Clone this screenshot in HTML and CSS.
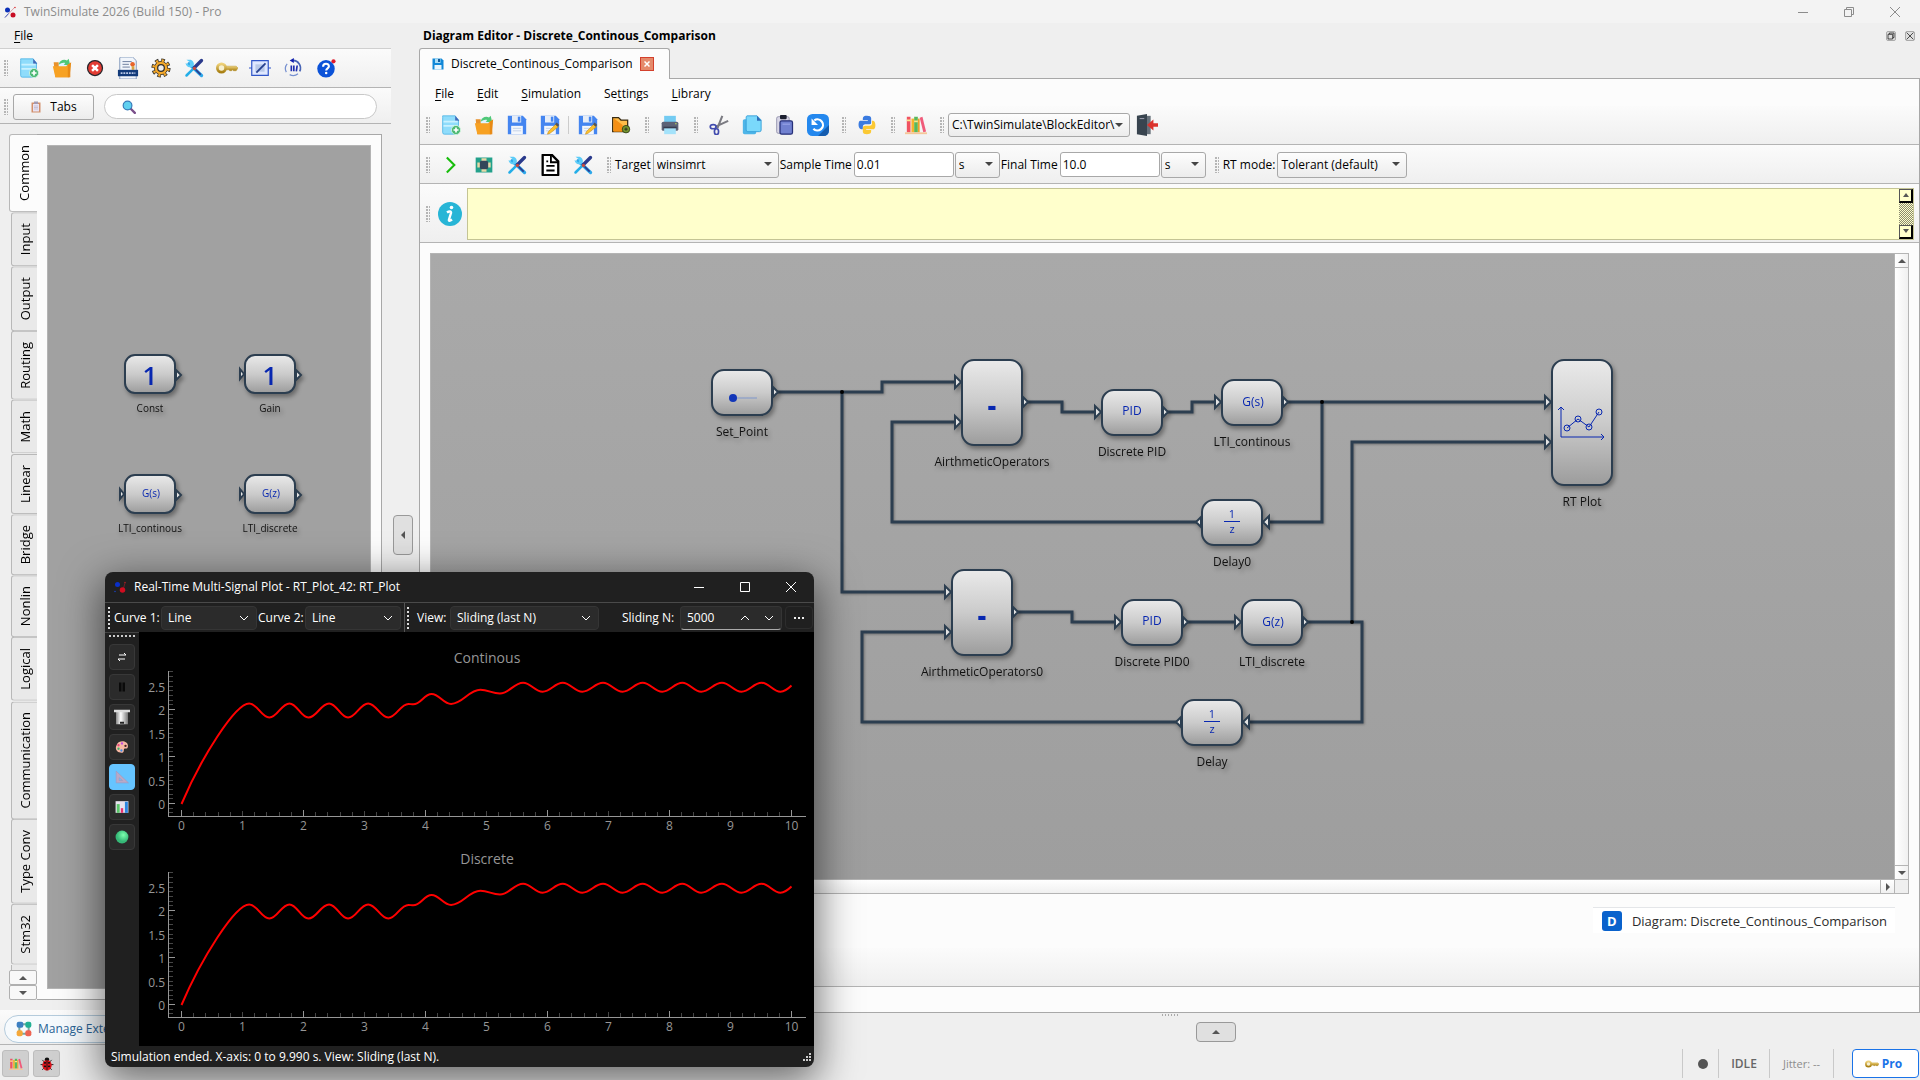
FILE: index.html
```html
<!DOCTYPE html>
<html lang="en">
<head>
<meta charset="utf-8">
<title>TwinSimulate 2026 (Build 150) - Pro</title>
<link rel="stylesheet" href="styles.css">
</head>
<body>
<svg class="defs" aria-hidden="true">
  <defs>
    <linearGradient id="blockFill" x1="0" y1="0" x2="0" y2="1"><stop offset="0" stop-color="#eaeaea"/><stop offset=".5" stop-color="#cbcbcb"/><stop offset="1" stop-color="#9c9c9c"/></linearGradient>
    <linearGradient id="goldFill" x1="0" y1="0" x2="0" y2="1"><stop offset="0" stop-color="#efd27a"/><stop offset="1" stop-color="#a87f12"/></linearGradient>
    <linearGradient id="binFill"><stop offset="0" stop-color="#888"/><stop offset=".4" stop-color="#fff"/><stop offset="1" stop-color="#777"/></linearGradient>
    <radialGradient id="greenFill" cx=".6" cy=".35"><stop offset="0" stop-color="#7dffae"/><stop offset="1" stop-color="#35b877"/></radialGradient>
  </defs>
  <symbol id="logo" viewBox="0 0 24 24"><path d="M2 23 22 2" stroke="#d8a0a8" stroke-width="2"/><path d="M2 23 9 15" stroke="#4466cc" stroke-width="2"/><circle cx="7" cy="8" r="5" fill="#0a2fb8"/><circle cx="18" cy="18" r="5" fill="#c80d24"/><circle cx="22" cy="3" r="1.500" fill="#d33"/></symbol>
  <symbol id="logo-dark" viewBox="0 0 24 24"><path d="M18 18 22 4" stroke="#8c1c28" stroke-width="1.500"/><circle cx="7" cy="7" r="5" fill="#0a2fc8"/><circle cx="17" cy="18" r="5.500" fill="#d00d20"/><circle cx="22" cy="3" r="1.500" fill="#b22"/><circle cx="2" cy="21" r="1.500" fill="#1a44c8"/></symbol>
  <symbol id="new" viewBox="0 0 24 24"><path d="M2 1h15l4 5v15a2 2 0 0 1-2 2H4a2 2 0 0 1-2-2V3z" fill="#8fdcfb" stroke="#4fb6e6"/><path d="M17 1l5 6h-5z" fill="#4169b8"/><path d="M3 8h17M3 13h17" stroke="#c9f1ff" stroke-width="2"/><circle cx="18" cy="18" r="5.500" fill="#4cb874" stroke="#d5f5e0"/><path d="M18 15v6M15 18h6" stroke="#fff" stroke-width="2"/></symbol>
  <symbol id="open" viewBox="0 0 24 24"><path d="M2 5h6l2 3h12v15H4z" fill="#e8912b"/><path d="M8 4h10l3 3v8H8z" fill="#dff3ff"/><path d="M8 8c1-5 6-7 10-5l2-2 2 8-8-1 2-2c-3-1-5 0-8 2z" fill="#4fc878"/><path d="M1 10h16l3-3 2 3-2 13H4z" fill="#f7a122"/><path d="m19 8 4-3-2 18h-2z" fill="#e88a14"/></symbol>
  <symbol id="stop" viewBox="0 0 24 24"><circle cx="12" cy="12" r="9" fill="#e33c33" stroke="#25252b" stroke-width="1.500"/><path d="m8.500 8.500 7 7m0-7-7 7" stroke="#fff" stroke-width="3"/></symbol>
  <symbol id="example" viewBox="0 0 24 24"><path d="M4 0h13l4 4v20H3V1z" fill="#f1f5fb" stroke="#7d94b8"/><path d="M6 5h10M6 8h7M6 11h8" stroke="#667799"/><circle cx="17" cy="8" r="2.500" fill="#e8642b"/><path d="M16 10h3v4h-3z" fill="#d9a441"/><path d="M1 14h22v7H1z" fill="#123a7a"/><path d="M4 17.500h16" stroke="#b9c8e8" stroke-width="2" stroke-dasharray="2 1"/></symbol>
  <symbol id="gear" viewBox="0 0 24 24"><circle cx="12" cy="12" r="9" fill="none" stroke="#32302c" stroke-width="5" stroke-dasharray="4 3.070"/><circle cx="12" cy="12" r="8" fill="#f5a92a" stroke="#32302c"/><circle cx="12" cy="12" r="9" fill="none" stroke="#f5a92a" stroke-width="3" stroke-dasharray="2.500 4.570" stroke-dashoffset="-.7"/><circle cx="12" cy="12" r="4" fill="#eee" stroke="#32302c" stroke-width="1.500"/></symbol>
  <symbol id="tools" viewBox="0 0 24 24"><path d="M6 7 21 21" stroke="#2ca7ea" stroke-width="4" stroke-linecap="round"/><path d="M3 2l4 3v4L2 6c0 3 3 6 7 5s4-7-1-9z" fill="#5cccf8"/><path d="m21 3-9 9" stroke="#2a3a8c" stroke-width="4" stroke-linecap="round"/><path d="M11 13 3 21" stroke="#23aee8" stroke-width="3" stroke-linecap="round"/><circle cx="12.500" cy="12.500" r="2" fill="#c94a3c"/><path d="m14 14 6 6" stroke="#2a3a8c" stroke-width="2"/></symbol>
  <symbol id="key" viewBox="0 0 24 24"><path d="M9 10h13l2 2-2 3h-3l-1-1-1 1h-2l-1-1H9z" fill="url(#goldFill)" stroke="#b58e24" stroke-width=".5"/><circle cx="6" cy="12" r="4.500" fill="#f7f0d0" stroke="url(#goldFill)" stroke-width="3"/></symbol>
  <symbol id="blockedit" viewBox="0 0 24 24"><path d="M3 4h18v16H3zM0 12h3M21 12h3" fill="#dfe8ff" stroke="#3056c8" stroke-width="1.300"/><path d="M7 8h10v8H7z" fill="#b9c9e8"/><path d="M8 17 18 7" stroke="#26418f" stroke-width="2"/></symbol>
  <symbol id="cycle" viewBox="0 0 24 24"><path d="M5 7a9 9 0 0 0-1 10M8 20a9 9 0 0 0 10-1" fill="none" stroke="#7690d0" stroke-width="1.500"/><path d="M20 16A9 9 0 0 0 11 3" fill="none" stroke="#4764b5" stroke-width="2"/><path d="m8 3 5-3v6z" fill="#111fae"/><path d="M10 9v7M13 9v7m3 0 1-7" stroke="#1f2fae" stroke-width="2"/></symbol>
  <symbol id="help" viewBox="0 0 24 24"><circle cx="12" cy="13" r="10.500" fill="#0b52d8"/><circle cx="21" cy="4" r="2.500" fill="#e01b2c"/><path d="M8.500 10.500C8.500 5.800 15.500 6 15.500 10c0 2.500-3.300 2.300-3.300 5" fill="none" stroke="#fff" stroke-width="2.500"/><circle cx="12.200" cy="18" r="1.500" fill="#fff"/></symbol>
  <symbol id="clip" viewBox="0 0 24 24"><path d="M3 3h18v20H3z" fill="#d2906c"/><path d="M6 6h12v15H6z" fill="#e9e3f3"/><path d="M8 1h8v5H8z" fill="#a39bb2"/><path d="M8 10h8M8 13h8M8 16h8" stroke="#a7a0b9"/></symbol>
  <symbol id="lens" viewBox="0 0 24 24"><path d="m15 15 7 7" stroke="#7a4f8a" stroke-width="4" stroke-linecap="round"/><circle cx="9.500" cy="9.500" r="7.500" fill="#5fd0f0" stroke="#3579b8" stroke-width="2"/></symbol>
  <symbol id="save" viewBox="0 0 24 24"><path d="M1 1h18l4 4v18H1z" fill="#4485f0"/><path d="M6 1h11v8H6z" fill="#e6edf7"/><path d="M13 2h3v6h-3z" fill="#4485f0"/><path d="M5 13h14v10H5z" fill="#f4f7fc"/><path d="M7 16h10M7 19h10" stroke="#bacbe4"/></symbol>
  <symbol id="saveas" viewBox="0 0 24 24"><use href="#save"/><path d="m12 22-3 1 1-3 9-9 3 3z" fill="#fbc02d" stroke="#c98a13" stroke-width=".7"/><path d="m18 11 2-2 3 3-2 2z" fill="#555"/></symbol>
  <symbol id="folder" viewBox="0 0 24 24"><path d="M2 3h7l3 3h8v14H2z" fill="#ffbd4a" stroke="#3a2c13" stroke-width="1.500"/><path d="m3 4 11 8v8H3z" fill="#f58f13"/><circle cx="18" cy="17" r="4.500" fill="#75962e" stroke="#2e3a17"/><path d="M18 15v4m-2-2h4" stroke="#222"/></symbol>
  <symbol id="printer" viewBox="0 0 24 24"><path d="M5 1h14v9H5z" fill="#73cbf2"/><rect x="2" y="8" width="20" height="11" rx="2" fill="#5c6277"/><path d="M5 15h14v8H5z" fill="#a4e2fa"/><path d="M4 14h16v2H4z" fill="#373c50"/><path d="M18 10h2v1h-2z" fill="#b6d85c"/></symbol>
  <symbol id="cut" viewBox="0 0 24 24"><path d="M16 1 10 16M23 7 8 14" stroke="#7b7b82" stroke-width="2.500"/><ellipse cx="5" cy="14" rx="3.500" ry="2.500" fill="none" stroke="#414bae" stroke-width="2"/><ellipse cx="9" cy="20" rx="2.500" ry="3.500" fill="none" stroke="#414bae" stroke-width="2"/></symbol>
  <symbol id="copy" viewBox="0 0 24 24"><rect x="1" y="5" width="16" height="18" rx="2" fill="#4eb5e8"/><path d="M6 1h12l5 5v12a2 2 0 0 1-2 2H7a2 2 0 0 1-2-2V2z" fill="#7ad8fb" stroke="#2f9bd6"/><path d="m18 1 5 6h-5z" fill="#2e6cb8"/></symbol>
  <symbol id="paste" viewBox="0 0 24 24"><rect x="2" y="2" width="15" height="20" rx="2" fill="#d8d6e6" stroke="#8c8aa6"/><rect x="6" width="8" height="5" rx="1" fill="#1c2030"/><rect x="6" y="7" width="15" height="16" rx="2" fill="#7181d0" stroke="#273078" stroke-width="1.500"/><path d="M9 11h9" stroke="#a5b2ee"/></symbol>
  <symbol id="undo" viewBox="0 0 24 24"><rect width="24" height="24" rx="6" fill="#2488ee"/><path d="m12 24 12-12v6a6 6 0 0 1-6 6z" fill="#155cae"/><path d="M8 7a6 6 0 1 1-1 9" fill="none" stroke="#fff" stroke-width="2.500"/><path d="M5 5v7h7z" fill="#fff"/></symbol>
  <symbol id="python" viewBox="0 0 24 24"><path d="M12 1c-5 0-5 2-5 5h6v1H4c-3 0-3 10 1 10h2v-3c0-2 1-3 3-3h5c2 0 2-1 2-3V4c0-2-2-3-5-3z" fill="#3a7be0"/><path d="M12 23c5 0 5-2 5-5h-6v-1h9c3 0 3-10-1-10h-1v3c0 2-1 3-3 3h-5c-2 0-3 1-3 3v4c0 2 2 3 5 3z" fill="#fbc934"/></symbol>
  <symbol id="books" viewBox="0 0 24 24"><path d="M2 3h4v17H2z" fill="#f05261"/><path d="M7 5h3v15H7z" fill="#f7b22d"/><path d="M10 3h4v17h-4z" fill="#59b85c"/><path d="M14 5h2v15h-2z" fill="#eda12a"/><path d="m16 4 3-1 4 16-3 1z" fill="#f05b7a"/><path d="M0 20h24v2H0z" fill="#f5c698"/><path d="M2 7h4M10 8h4" stroke="#ffe48b" stroke-width="2"/></symbol>
  <symbol id="door" viewBox="0 0 24 24"><path d="M10 2h6v20h-6z" fill="#68727c"/><path d="m1 2 11-2v24L1 22z" fill="#38444f"/><path d="M4 5h5" stroke="#aab"/><path d="M24 10v4h-5v4l-7-6 7-6v4z" fill="#db322c"/></symbol>
  <symbol id="play" viewBox="0 0 24 24"><path d="m7 3 9 9-9 9" fill="none" stroke="#18bd0c" stroke-width="2.500"/></symbol>
  <symbol id="chip" viewBox="0 0 24 24"><path d="M2 3h20v18H2z" fill="#23a18b"/><path d="M9 4h6v16H9zM4 9h16v6H4z" fill="#e6d9a8"/><rect x="7" y="7" width="10" height="10" rx="2" fill="#33465a"/></symbol>
  <symbol id="page" viewBox="0 0 24 24"><path d="M4 1h10l7 7v15H4z" fill="#fff" stroke="#000" stroke-width="2.500" stroke-linejoin="round"/><path d="M13 1v8h8M8 13h9M8 18h9M8 8h2" fill="none" stroke="#000" stroke-width="2"/></symbol>
  <symbol id="info" viewBox="0 0 24 24"><circle cx="12" cy="12" r="12" fill="#27b5d6"/><circle cx="13.500" cy="5.500" r="1.800" fill="#fff"/><path d="M9 10.500c2-1.500 4.500-1.500 4 .5l-2 6.500c-.5 2 1 1.500 3 0" fill="none" stroke="#fff" stroke-width="2.400"/></symbol>
  <symbol id="disk" viewBox="0 0 24 24"><path d="M1 1h18l4 4v18H1z" fill="#1188d8"/><path d="M6 1h11v9H6z" fill="#a9dcf5"/><path d="M12 2h4v6h-4z" fill="#125b9c"/><path d="M5 14h14v9H5z" fill="#e9f6fd"/></symbol>
  <symbol id="bug" viewBox="0 0 24 24"><path d="M4 5l5 5M20 5l-5 5M1 13h22M4 22l5-6M20 22l-5-6" stroke="#111" stroke-width="1.500"/><circle cx="12" cy="5" r="4" fill="#111"/><ellipse cx="12" cy="14" rx="8" ry="9" fill="#e0141c"/><path d="M12 5v18" stroke="#111" stroke-width="1.500"/><path d="M8 10h1m6 0h1m-8 6h1m6 0h1" stroke="#111" stroke-width="3" stroke-linecap="round"/></symbol>
  <symbol id="cubes" viewBox="0 0 24 24"><path d="M5 5h14v14H5z" fill="none" stroke="#7aa7a0" stroke-width="3"/><rect x="1" y="1" width="10" height="9" rx="3" fill="#3c7fc2"/><rect x="14" y="1" width="9" height="9" rx="3" fill="#22b094"/><rect x="1" y="14" width="9" height="9" rx="3" fill="#f5a83a"/><rect x="14" y="14" width="9" height="9" rx="3" fill="#ee6352"/></symbol>
  <symbol id="swap" viewBox="0 0 12 12"><path d="M3 4h7L8 2M9 8H2l2 2" fill="none" stroke="#fff"/></symbol>
  <symbol id="pause" viewBox="0 0 24 24"><path d="M6 3h5v18H6zM13 3h5v18h-5z" fill="#0a0a0a"/></symbol>
  <symbol id="bin" viewBox="0 0 24 24"><path d="M3 4h18v19H3z" fill="url(#binFill)"/><path d="M0 1h24v4H0z" fill="#ddd"/><path d="M9 19h6v3H9z" fill="#222"/></symbol>
  <symbol id="palette" viewBox="0 0 24 24"><path d="M3 8C7-1 24 1 22 12c-1 4-4 2-6 3s1 7-5 7C3 22-1 15 3 8z" fill="#f7b7a3"/><circle cx="12" cy="6" r="2" fill="#c04ae0"/><circle cx="6" cy="9" r="2" fill="#e8407c"/><circle cx="6" cy="15" r="2" fill="#3fb06b"/><circle cx="11" cy="18" r="2" fill="#3f8fe8"/><circle cx="18" cy="10" r="2" fill="#422"/></symbol>
  <symbol id="ruler" viewBox="0 0 24 24"><path d="M2 2v20h21zM7 13v5h6z" fill="#b9a9c6" fill-rule="evenodd" stroke="#a594b6"/></symbol>
  <symbol id="bars" viewBox="0 0 24 24"><path d="M1 2h22v20H1z" fill="#e7e3ee"/><path d="M3 7h5v15H3z" fill="#5bc66a"/><path d="M10 14h4v8h-4z" fill="#e8336f"/><path d="M17 3h5v19h-5z" fill="#2c86e0"/></symbol>
  <symbol id="ball" viewBox="0 0 24 24"><circle cx="12" cy="12" r="11" fill="url(#greenFill)"/></symbol>
  <symbol id="min" viewBox="0 0 12 12"><path d="M1 6.500h10" stroke="currentColor"/></symbol>
  <symbol id="max" viewBox="0 0 12 12"><path d="M1.500 1.500h9v9h-9z" fill="none" stroke="currentColor"/></symbol>
  <symbol id="restore" viewBox="0 0 12 12"><path d="M1.500 3.500h7v7h-7zM3.500 3V1.500h7v7H9" fill="none" stroke="currentColor"/></symbol>
  <symbol id="x" viewBox="0 0 12 12"><path d="m1 1 10 10M11 1 1 11" stroke="currentColor"/></symbol>
  <symbol id="x-bold" viewBox="0 0 12 12"><path d="m1 1 10 10M11 1 1 11" stroke="currentColor" stroke-width="3"/></symbol>
  <symbol id="down" viewBox="0 0 12 12"><path d="m2 4 4 4 4-4" fill="none" stroke="currentColor"/></symbol>
  <symbol id="up" viewBox="0 0 12 12"><path d="m2 8 4-4 4 4" fill="none" stroke="currentColor"/></symbol>
</svg>

<header class="titlebar">
  <svg class="i12"><use href="#logo"/></svg>
  <span class="titlebar-text">TwinSimulate 2026 (Build 150) - Pro</span>
  <button class="win" aria-label="Minimize"><svg class="i12"><use href="#min"/></svg></button>
  <button class="win" aria-label="Restore"><svg class="i12"><use href="#restore"/></svg></button>
  <button class="win" aria-label="Close"><svg class="i12"><use href="#x"/></svg></button>
</header>

<div class="workspace">
  <aside class="side">
    <nav class="side-menu"><a href="#file"><u>F</u>ile</a></nav>
    <div class="toolbar side-tools">
      <i class="handle"></i>
      <button class="tool" aria-label="New"><svg><use href="#new"/></svg></button>
      <button class="tool" aria-label="Open"><svg><use href="#open"/></svg></button>
      <button class="tool" aria-label="Close project"><svg><use href="#stop"/></svg></button>
      <button class="tool" aria-label="Examples"><svg class="i22"><use href="#example"/></svg></button>
      <button class="tool" aria-label="Settings"><svg><use href="#gear"/></svg></button>
      <button class="tool" aria-label="Tools"><svg><use href="#tools"/></svg></button>
      <button class="tool" aria-label="License"><svg class="i22"><use href="#key"/></svg></button>
      <button class="tool" aria-label="Edit block"><svg class="i22"><use href="#blockedit"/></svg></button>
      <button class="tool" aria-label="Reload"><svg><use href="#cycle"/></svg></button>
      <button class="tool" aria-label="Help"><svg><use href="#help"/></svg></button>
    </div>
    <div class="toolbar side-search">
      <i class="handle"></i>
      <button class="tabs-btn"><svg class="i12"><use href="#clip"/></svg>Tabs</button>
      <label class="search"><svg><use href="#lens"/></svg><input type="search" aria-label="Search blocks"></label>
    </div>
    <div class="library">
      <div class="vtabs">
        <button class="vtab active">Common</button>
        <button class="vtab">Input</button>
        <button class="vtab">Output</button>
        <button class="vtab">Routing</button>
        <button class="vtab">Math</button>
        <button class="vtab">Linear</button>
        <button class="vtab">Bridge</button>
        <button class="vtab">Nonlin</button>
        <button class="vtab">Logical</button>
        <button class="vtab">Communication</button>
        <button class="vtab">Type Conv</button>
        <button class="vtab">Stm32</button>
        <span class="vtab-rest"></span>
        <button class="vscroll" aria-label="Scroll up"><i class="tri up"></i></button>
        <button class="vscroll" aria-label="Scroll down"><i class="tri"></i></button>
      </div>
      <div class="library-pane">
        <svg class="palette">
          <g transform="translate(-48,-146)">
            <g class="node" transform="translate(125,355)"><rect width="50" height="38" rx="10"/><path d="M51 15l5 5-5 5z"/><text class="big" x="25" y="30">1</text><text class="cap small" x="25" y="57">Const</text></g>
            <g class="node" transform="translate(245,355)"><rect width="50" height="38" rx="10"/><path d="M51 15l5 5-5 5zM-5 14l4 5-4 5z"/><text class="big" x="25" y="30">1</text><text class="cap small" x="25" y="57">Gain</text></g>
            <g class="node" transform="translate(125,475)"><rect width="50" height="38" rx="10"/><path d="M51 15l5 5-5 5zM-5 14l4 5-4 5z"/><text class="sym small" x="26" y="22">G(s)</text><text class="cap small" x="25" y="57">LTI_continous</text></g>
            <g class="node" transform="translate(245,475)"><rect width="50" height="38" rx="10"/><path d="M51 15l5 5-5 5zM-5 14l4 5-4 5z"/><text class="sym small" x="26" y="22">G(z)</text><text class="cap small" x="25" y="57">LTI_discrete</text></g>
          </g>
        </svg>
      </div>
    </div>
    <div class="extensions"><button class="ext-btn"><svg><use href="#cubes"/></svg>Manage Extensions</button></div>
  </aside>

  <div class="split"><button class="collapse" aria-label="Collapse panel"><i class="tri left"></i></button></div>

  <main class="editor">
    <div class="dock-title">
      <h1>Diagram Editor - Discrete_Continous_Comparison</h1>
      <button class="dock-btn" aria-label="Float"><svg><use href="#restore"/></svg></button>
      <button class="dock-btn" aria-label="Close dock"><svg><use href="#x"/></svg></button>
    </div>
    <div class="doc-tabs">
      <div class="doc-tab"><svg class="i12"><use href="#disk"/></svg><span>Discrete_Continous_Comparison</span><button class="doc-close" aria-label="Close tab"><svg><use href="#x-bold"/></svg></button></div>
    </div>
    <section class="pane">
      <nav class="menubar">
        <a href="#file"><u>F</u>ile</a><a href="#edit"><u>E</u>dit</a><a href="#sim"><u>S</u>imulation</a><a href="#settings">Se<u>t</u>tings</a><a href="#library"><u>L</u>ibrary</a>
      </nav>
      <div class="toolbar">
        <i class="handle"></i>
        <button class="tool" aria-label="New"><svg><use href="#new"/></svg></button>
        <button class="tool" aria-label="Open"><svg><use href="#open"/></svg></button>
        <button class="tool" aria-label="Save"><svg><use href="#save"/></svg></button>
        <button class="tool" aria-label="Save as"><svg><use href="#saveas"/></svg></button>
        <i class="sep"></i>
        <button class="tool" aria-label="Edit"><svg><use href="#saveas"/></svg></button>
        <button class="tool" aria-label="Folder"><svg><use href="#folder"/></svg></button>
        <i class="handle"></i>
        <button class="tool" aria-label="Print"><svg><use href="#printer"/></svg></button>
        <i class="handle"></i>
        <button class="tool" aria-label="Cut"><svg><use href="#cut"/></svg></button>
        <button class="tool" aria-label="Copy"><svg><use href="#copy"/></svg></button>
        <button class="tool" aria-label="Paste"><svg><use href="#paste"/></svg></button>
        <button class="tool" aria-label="Undo"><svg class="i22"><use href="#undo"/></svg></button>
        <i class="handle"></i>
        <button class="tool" aria-label="Python"><svg><use href="#python"/></svg></button>
        <i class="handle"></i>
        <button class="tool" aria-label="Library"><svg class="i22"><use href="#books"/></svg></button>
        <i class="handle"></i>
        <span class="combo path"><select aria-label="Path"><option>C:\TwinSimulate\BlockEditor\</option></select></span>
        <button class="tool" aria-label="Exit"><svg class="i22"><use href="#door"/></svg></button>
      </div>
      <div class="toolbar params">
        <i class="handle"></i>
        <button class="tool" aria-label="Run"><svg><use href="#play"/></svg></button>
        <button class="tool" aria-label="Target board"><svg><use href="#chip"/></svg></button>
        <button class="tool" aria-label="Build"><svg><use href="#tools"/></svg></button>
        <button class="tool" aria-label="Report"><svg class="i22"><use href="#page"/></svg></button>
        <button class="tool" aria-label="Options"><svg><use href="#tools"/></svg></button>
        <i class="handle"></i>
        <label for="target">Target</label><span class="combo target"><select id="target"><option>winsimrt</option></select></span>
        <label for="sample">Sample Time</label><input id="sample" value="0.01"><span class="combo unit"><select aria-label="Sample time unit"><option>s</option></select></span>
        <label for="final">Final Time</label><input id="final" value="10.0"><span class="combo unit"><select aria-label="Final time unit"><option>s</option></select></span>
        <i class="handle"></i>
        <label for="mode">RT mode:</label><span class="combo mode"><select id="mode"><option>Tolerant (default)</option></select></span>
      </div>
      <div class="toolbar message">
        <i class="handle"></i>
        <svg class="info-icon"><use href="#info"/></svg>
        <div class="message-box">
          <textarea aria-label="Messages" readonly></textarea>
          <div class="retro-scroll"><button aria-label="Up"><i class="tri up"></i></button><span></span><button aria-label="Down"><i class="tri"></i></button></div>
        </div>
      </div>
      <div class="canvas-frame">
        <svg class="canvas">
          <g transform="translate(-431,-254)">
            <g class="wires">
              <path d="M777 392H882V382H954"/><path d="M842 392V592H944"/><path d="M1197 522H892V422H954"/>
              <path d="M1027 402H1062V412H1094"/><path d="M1167 412H1192V402H1214"/><path d="M1287 402H1546"/>
              <path d="M1322 402V522H1269"/><path d="M1017 612H1072V622H1114"/><path d="M1187 622H1234"/>
              <path d="M1307 622H1362V722H1249"/><path d="M1352 622V442H1546"/><path d="M1177 722H862V632H944"/>
            </g>
            <g class="dots"><circle cx="842" cy="392" r="2"/><circle cx="1322" cy="402" r="2"/><circle cx="1352" cy="622" r="2"/></g>
            <g class="node" transform="translate(712,370)"><rect width="60" height="45" rx="12"/><path d="M61 17l5 5-5 5z"/><path class="slide" d="M20 28h25"/><circle cx="21" cy="28" r="4" class="knob"/><text class="cap" x="30" y="66">Set_Point</text></g>
            <g class="node" transform="translate(962,360)"><rect width="60" height="85" rx="12"/><path d="M61 37l5 5-5 5zM-7 16l6 6-6 6zM-7 56l6 6-6 6z"/><text class="big minus" x="30" y="55">-</text><text class="cap" x="30" y="106">AirthmeticOperators</text></g>
            <g class="node" transform="translate(1102,390)"><rect width="60" height="45" rx="12"/><path d="M61 17l5 5-5 5zM-7 16l6 6-6 6z"/><text class="sym" x="30" y="25">PID</text><text class="cap" x="30" y="66">Discrete PID</text></g>
            <g class="node" transform="translate(1222,380)"><rect width="60" height="45" rx="12"/><path d="M61 17l5 5-5 5zM-7 16l6 6-6 6z"/><text class="sym" x="31" y="26">G(s)</text><text class="cap" x="30" y="66">LTI_continous</text></g>
            <g class="node" transform="translate(1202,500)"><rect width="60" height="45" rx="12"/><path d="M-1 17l-5 5 5 5zM67 16l-6 6 6 6z"/><text class="sym frac" x="30" y="18">1</text><path class="bar" d="M22 21.500h16"/><text class="sym frac" x="30" y="33">z</text><text class="cap" x="30" y="66">Delay0</text></g>
            <g class="node" transform="translate(952,570)"><rect width="60" height="85" rx="12"/><path d="M61 37l5 5-5 5zM-7 16l6 6-6 6zM-7 56l6 6-6 6z"/><text class="big minus" x="30" y="55">-</text><text class="cap" x="30" y="106">AirthmeticOperators0</text></g>
            <g class="node" transform="translate(1122,600)"><rect width="60" height="45" rx="12"/><path d="M61 17l5 5-5 5zM-7 16l6 6-6 6z"/><text class="sym" x="30" y="25">PID</text><text class="cap" x="30" y="66">Discrete PID0</text></g>
            <g class="node" transform="translate(1242,600)"><rect width="60" height="45" rx="12"/><path d="M61 17l5 5-5 5zM-7 16l6 6-6 6z"/><text class="sym" x="31" y="26">G(z)</text><text class="cap" x="30" y="66">LTI_discrete</text></g>
            <g class="node" transform="translate(1182,700)"><rect width="60" height="45" rx="12"/><path d="M-1 17l-5 5 5 5zM67 16l-6 6 6 6z"/><text class="sym frac" x="30" y="18">1</text><path class="bar" d="M22 21.500h16"/><text class="sym frac" x="30" y="33">z</text><text class="cap" x="30" y="66">Delay</text></g>
            <g class="node" transform="translate(1552,360)"><rect width="60" height="125" rx="12"/><path d="M-7 36l6 6-6 6zM-7 76l6 6-6 6z"/><g class="chart"><path d="M9 48v29h43M6 50l3-3 3 3M49 74l3 3-3 3"/><path d="m15 68 11-9 11 8 10-15"/><circle cx="15" cy="68" r="3"/><circle cx="26" cy="59" r="3"/><circle cx="37" cy="67" r="3"/><circle cx="47" cy="52" r="3"/></g><text class="cap" x="30" y="146">RT Plot</text></g>
          </g>
        </svg>
        <div class="vbar"><button aria-label="Scroll up"><i class="tri up"></i></button><button aria-label="Scroll down"><i class="tri"></i></button></div>
        <div class="hbar"><button aria-label="Scroll right"><i class="tri right"></i></button></div>
        <i class="corner"></i>
      </div>
      <div class="crumbs"><div class="crumb"><b>D</b><span>Diagram: Discrete_Continous_Comparison</span></div></div>
      <div class="toolbar bottom-bar"></div>
      <div class="pane-foot"></div>
    </section>
    <div class="drawer"><i class="grip"></i><button class="collapse wide" aria-label="Expand panel"><i class="tri up"></i></button></div>
  </main>
</div>

<footer class="statusbar">
  <button class="status-btn" aria-label="Library"><svg><use href="#books"/></svg></button>
  <button class="status-btn" aria-label="Debug"><svg><use href="#bug"/></svg></button>
  <div class="status-right">
    <span class="cell lamp"><i></i></span><span class="cell idle">IDLE</span><span class="cell jitter">Jitter: --</span><span class="cell"></span>
    <button class="pro"><svg><use href="#key"/></svg>Pro</button>
  </div>
</footer>

<section class="plotwin">
  <header class="plot-title">
    <svg class="i12"><use href="#logo-dark"/></svg>
    <h2>Real-Time Multi-Signal Plot - RT_Plot_42: RT_Plot</h2>
    <button class="win" aria-label="Minimize plot"><svg class="i12"><use href="#min"/></svg></button>
    <button class="win" aria-label="Maximize plot"><svg class="i12"><use href="#max"/></svg></button>
    <button class="win" aria-label="Close plot"><svg class="i12"><use href="#x"/></svg></button>
  </header>
  <div class="plot-tools">
    <i class="dotline"></i>
    <label for="c1">Curve 1:</label><span class="dark-combo"><select id="c1"><option>Line</option></select><svg class="i12"><use href="#down"/></svg></span>
    <label for="c2">Curve 2:</label><span class="dark-combo"><select id="c2"><option>Line</option></select><svg class="i12"><use href="#down"/></svg></span>
    <i class="dotline framed"></i>
    <label for="view" class="view-label">View:</label><span class="dark-combo view"><select id="view"><option>Sliding (last N)</option></select><svg class="i12"><use href="#down"/></svg></span>
    <label for="sliding" class="sliding-label">Sliding N:</label><span class="spin"><input id="sliding" value="5000"><svg class="i12"><use href="#up"/></svg><svg class="i12"><use href="#down"/></svg></span>
    <button class="more" aria-label="More"><i></i><i></i><i></i></button>
  </div>
  <div class="plot-body">
    <div class="plot-side">
      <i class="dotrow"></i>
      <button aria-label="Swap"><svg class="i12"><use href="#swap"/></svg></button>
      <button aria-label="Pause"><svg class="i12"><use href="#pause"/></svg></button>
      <button aria-label="Clear"><svg class="i16"><use href="#bin"/></svg></button>
      <button aria-label="Colors"><svg class="i14"><use href="#palette"/></svg></button>
      <button class="on" aria-label="Measure"><svg class="i14"><use href="#ruler"/></svg></button>
      <button aria-label="Statistics"><svg class="i14"><use href="#bars"/></svg></button>
      <button aria-label="Record"><svg class="i14"><use href="#ball"/></svg></button>
    </div>
    <div class="plots">
      <svg class="plot" data-title="Continous"></svg>
      <svg class="plot" data-title="Discrete"></svg>
    </div>
  </div>
  <footer class="plot-status"><span>Simulation ended. X-axis: 0 to 9.990 s. View: Sliding (last N).</span><svg class="i12"><path d="M9 2h2v2H9zM9 5h2v2H9zM9 8h2v2H9zM6 5h2v2H6zM6 8h2v2H6zM3 8h2v2H3z" fill="#ccc"/></svg></footer>
</section>
<script src="app.js"></script>
</body>
</html>
```
FILE: styles.css
```css
* { box-sizing: border-box; }
body { margin: 0; height: 100vh; display: flex; flex-direction: column; overflow: hidden; background: #efefef; color: #000; font: 12px/16px "Open Sans", "Noto Sans", sans-serif; }
button, input, select, textarea { font: inherit; color: inherit; margin: 0; border-radius: 0; }
button { padding: 0; border: 0; background: none; display: flex; align-items: center; justify-content: center; flex: none; }
a { color: inherit; text-decoration: none; }
u { text-underline-offset: 2px; }
h1, h2 { margin: 0; font-size: 12px; }
svg { flex: none; }
.defs { position: absolute; width: 0; height: 0; }
.i12 { width: 12px; height: 12px; }
.i14 { width: 14px; height: 14px; }
.i16 { width: 16px; height: 16px; }

.tri { display: block; width: 0; height: 0; border: solid transparent; border-width: 4px 4px 0; border-top-color: #555; }
.tri.up { border-width: 0 4px 4px; border-color: transparent transparent #555; }
.tri.left { border-width: 4px 4px 4px 0; border-color: transparent #555 transparent transparent; }
.tri.right { border-width: 4px 0 4px 4px; border-color: transparent transparent transparent #555; }

.titlebar { flex: none; height: 23px; display: flex; align-items: center; padding: 0 2px 0 4px; background: #f3f3f3; color: #8c8c8c; }
.titlebar-text { flex: 1; padding-left: 8px; }
.win { width: 46px; height: 22px; }

.workspace { flex: 1; min-height: 0; display: flex; }
.side { flex: none; width: 391px; display: flex; flex-direction: column; }
.side-menu { flex: none; height: 26px; padding: 5px 14px; border-bottom: 1px solid #cfcfcf; }
.toolbar { flex: none; height: 39px; display: flex; align-items: center; padding-left: 6px; background: linear-gradient(#fbfbfb, #efefef); border-bottom: 1px solid #b4b4b4; }
.handle { flex: none; width: 4px; height: 16px; margin: 0 4px 0 8px; background: radial-gradient(circle at 1px 1px, #b5b5b5 1px, transparent 1px) 0 0 / 3px 3px; }
.handle:first-child { margin-left: 0; }
.tool { width: 33px; height: 33px; }
.tool svg { width: 20px; height: 20px; }
.tool .i22 { width: 22px; height: 22px; }
.sep { flex: none; width: 1px; height: 18px; margin: 0 2px; background: #ccc; }
.side-tools { padding-left: 4px; }
.side-search { height: 36px; padding: 2px 0 0 4px; }
.tabs-btn { width: 81px; height: 26px; gap: 8px; margin-left: 1px; border: 1px solid #a8a8a8; border-radius: 3px; background: linear-gradient(#fdfdfd, #ececec); }
.search { width: 273px; height: 25px; margin-left: 10px; padding: 0 12px 0 17px; display: flex; align-items: center; border: 1px solid #c8c8c8; border-radius: 13px; background: #fff; }
.search svg { width: 14px; height: 14px; }
.search input { flex: 1; min-width: 0; border: 0; outline: 0; background: none; }

.library { flex: 1; min-height: 0; display: flex; margin: 10px 9px 10px 9px; }
.vtabs { flex: none; width: 28px; display: flex; flex-direction: column; align-items: flex-end; }
.vtab { width: 26px; padding: 10px 0; writing-mode: vertical-rl; transform: rotate(180deg); font-size: 13px; border: 1px solid #b8b8b8; border-left: 0; border-radius: 0 3px 3px 0; background: #e9e9e9; }
.vtab.active { width: 28px; background: #fcfcfc; }
.vtab-rest { flex: 1; min-height: 0; width: 26px; border-left: 1px solid #b8b8b8; background: #e9e9e9; }
.vscroll { width: 28px; height: 15px; border: 1px solid #b0b0b0; border-radius: 2px; background: #f8f8f8; }
.library-pane { flex: 1; padding: 10px; display: flex; border: 1px solid #a8a8a8; border-left: 0; background: #fcfcfc; }
.palette { flex: 1; background: #a1a1a1; border: 1px solid #b4b4b4; }

.node { filter: drop-shadow(2px 3px 2px rgba(0, 0, 0, .35)); }
.node rect { fill: url(#blockFill); stroke: #2c3e50; stroke-width: 2px; }
.node path { fill: #e4e4e4; stroke: #2c3e50; stroke-width: 2px; }
.node text { text-anchor: middle; font-size: 12px; }
.node .cap { fill: #111; }
.node .sym { fill: #0827b0; }
.node .small { font-size: 10px; }
.node .frac { font-size: 11px; }
.node .big { fill: #0827b0; font-size: 26px; font-weight: 600; }
.node .minus { font-weight: 800; }
.node .bar { stroke: #0827b0; stroke-width: 1px; }
.node .slide { stroke: #7f97cc; stroke-width: 1px; }
.node .knob { fill: #1236b8; }
.node .chart path, .node .chart circle { fill: none; stroke: #0827b0; stroke-width: 1px; }
.wires path { fill: none; stroke: #2c3e50; stroke-width: 3px; }
.wires { filter: drop-shadow(1px 1px 1px rgba(0, 0, 0, .3)); }
.dots { fill: #000; }

.extensions { flex: none; height: 35px; display: flex; align-items: center; padding: 3px 0 0 4px; background: linear-gradient(#fbfbfb, #efefef); border-bottom: 1px solid #b4b4b4; }
.ext-btn { height: 28px; padding: 0 16px 0 11px; gap: 6px; border: 1px solid #b4cbdc; border-radius: 14px; background: #f6fafd; color: #2a6496; }
.ext-btn svg { width: 16px; height: 16px; }

.split { flex: none; width: 28px; display: flex; align-items: center; padding: 2px 0 0 2px; }
.collapse { width: 20px; height: 40px; border: 1px solid #999; border-radius: 4px; background: #e0e0e0; }
.collapse.wide { width: 40px; height: 20px; }

.editor { flex: 1; min-width: 0; display: flex; flex-direction: column; }
.dock-title { flex: none; height: 25px; display: flex; align-items: center; padding: 1px 5px 0 4px; gap: 9px; }
.dock-title h1 { flex: 1; }
.dock-btn { width: 10px; height: 10px; border: 1px solid #aaa; border-radius: 2px; background: #ddd; }
.dock-btn svg { width: 8px; height: 8px; }
.doc-tabs { flex: none; height: 30px; display: flex; }
.doc-tab { display: flex; align-items: center; gap: 7px; height: 31px; padding: 0 15px 0 12px; margin-bottom: -1px; border: 1px solid #a8a8a8; border-bottom: 0; border-radius: 3px 3px 0 0; background: #fcfcfc; z-index: 1; }
.doc-close { width: 14px; height: 14px; border: 1px solid #d3402c; background: #e58a6b; color: #fff; }
.doc-close svg { width: 6px; height: 6px; }
.pane { flex: 1; min-height: 0; display: flex; flex-direction: column; border: 1px solid #a8a8a8; background: #fcfcfc; }
.menubar { flex: none; height: 27px; display: flex; align-items: center; gap: 23px; padding-left: 15px; padding-top: 2px; }
.combo { position: relative; flex: none; height: 26px; }
.combo::after { content: ""; position: absolute; right: 7px; top: 10px; border: 4px solid transparent; border-top-color: #444; border-bottom: 0; }
.combo select { appearance: none; width: 100%; height: 100%; padding: 0 3px; border: 1px solid #a8a8a8; border-radius: 3px; background: linear-gradient(#fdfdfd, #ececec); }
.path { width: 182px; height: 24px; }
.target { width: 126px; }
.unit { width: 45px; }
.mode { width: 130px; }
.params { gap: 1px; padding-top: 1px; }
.params .tool { margin-right: -1px; }
.params .handle { margin-right: 3px; }
.params label { padding-right: 1px; white-space: nowrap; }
.params input { width: 100px; height: 25px; padding: 0 2px; border: 1px solid #a8a8a8; border-radius: 3px; background: #fff; }
.message { height: 59px; padding-top: 1px; }
.info-icon { width: 24px; height: 24px; margin: 0 5px 0 4px; }
.message-box { flex: 1; height: 52px; margin-right: 5px; display: flex; border: 1px solid #c4c494; background: #ffffcc; }
.message-box textarea { flex: 1; border: 0; resize: none; background: none; outline: 0; }
.retro-scroll { width: 14px; display: flex; flex-direction: column; background: repeating-conic-gradient(#8a8a70 0 25%, #ffffcc 0 50%) 0 0 / 2px 2px; }
.retro-scroll span { flex: 1; }
.retro-scroll button { height: 14px; border: 1px solid #555; border-right: 2px solid #000; border-bottom: 2px solid #000; background: #ffffcc; }
.retro-scroll .tri { border-left-width: 3px; border-right-width: 3px; }

.canvas-frame { flex: 1; min-height: 0; margin: 10px; display: grid; grid-template: 1fr 14px / 1fr 14px; border: 1px solid #b4b4b4; }
.canvas { width: 100%; height: 100%; background: linear-gradient(#a9a9a9, #9e9e9e); }
.vbar { display: flex; flex-direction: column; justify-content: space-between; border-left: 1px solid #b4b4b4; background: linear-gradient(90deg, #fff, #f0f0f0); }
.hbar { display: flex; justify-content: flex-end; border-top: 1px solid #b4b4b4; background: linear-gradient(#fff, #f0f0f0); }
.vbar button { height: 14px; border: solid #b4b4b4; border-width: 0 0 1px; }
.vbar button:last-child { border-width: 1px 0 0; }
.hbar button { width: 14px; border-left: 1px solid #b4b4b4; }
.corner { border: solid #b4b4b4; border-width: 1px 0 0 1px; background: #efefef; }
.crumbs { flex: none; height: 44px; display: flex; justify-content: flex-end; padding: 3px 24px 0 0; }
.crumb { display: flex; align-items: center; gap: 10px; height: 26px; padding: 0 8px 0 9px; border-top: 1px solid #e4e6e9; background: #fff; color: #2b2b2b; font-size: 13px; }
.crumb b { width: 20px; height: 20px; border-radius: 3px; background: #0a62cc; color: #fff; line-height: 20px; text-align: center; }
.bottom-bar { height: 39px; }
.pane-foot { flex: none; height: 25px; }
.drawer { flex: none; height: 32px; display: flex; flex-direction: column; align-items: center; }
.grip { width: 16px; height: 2px; margin: 1px 0 6px; background: repeating-linear-gradient(90deg, #aaa 0 1px, transparent 1px 3px); }
.drawer .collapse { margin-left: 92px; }

.statusbar { flex: none; height: 35px; display: flex; align-items: center; gap: 4px; padding: 2px 0 0 2px; }
.status-btn { width: 27px; height: 27px; border: 1px solid #bdbdbd; border-radius: 3px; background: #cfcfcf; }
.status-btn svg { width: 14px; height: 14px; }
.status-right { flex: 1; height: 29px; display: flex; justify-content: flex-end; }
.cell { display: flex; align-items: center; justify-content: center; border-left: 1px solid #c9c9c9; }
.lamp { width: 36px; padding-left: 5px; }
.lamp i { width: 10px; height: 10px; border-radius: 5px; background: #555; }
.idle { width: 51px; font-weight: 600; color: #666; }
.jitter { width: 64px; font-size: 11px; color: #8c8c8c; }
.pro { width: 67px; margin: 0 1px 0 18px; padding-right: 4px; gap: 3px; border: 1px solid #1a73e8; border-radius: 4px; background: #fff; color: #1a73e8; font-weight: 700; }
.pro svg { width: 14px; height: 14px; }

.plotwin { position: absolute; left: 105px; top: 572px; width: 709px; height: 495px; display: flex; flex-direction: column; overflow: hidden; border-radius: 8px; background: #202020; color: #fff; box-shadow: 0 12px 40px 4px rgba(0, 0, 0, .55); }
.plot-title { flex: none; height: 31px; display: flex; align-items: center; padding-left: 9px; border-bottom: 1px solid #4a4a4a; }
.plot-title h2 { flex: 1; padding-left: 8px; font-weight: 400; }
.plot-tools { flex: none; height: 29px; display: flex; align-items: center; white-space: nowrap; }
.dotline { flex: none; width: 2px; height: 22px; margin: 0 4px 0 3px; background: repeating-linear-gradient(#ddd 0 2px, transparent 2px 4px); }
.dotline.framed { width: 5px; height: 29px; margin: 0 8px 0 2px; border-left: 1px solid #555; background: repeating-linear-gradient(#ddd 0 2px, transparent 2px 4px) 2px 4px / 2px 22px no-repeat; }
.plot-tools label { width: 47px; }
.plot-tools .view-label { width: 33px; }
.plot-tools .sliding-label { width: 58px; margin-left: 22px; }
.dark-combo, .spin { flex: none; width: 96px; height: 24px; margin-right: 1px; padding: 0 6px; display: flex; align-items: center; border: 1px solid #353535; border-radius: 4px; background: #2b2b2b; }
.dark-combo select { appearance: none; flex: 1; min-width: 0; padding: 0; border: 0; background: none; }
.dark-combo.view { width: 149px; }
.spin { width: 102px; gap: 12px; border-bottom-color: #aaa; }
.spin input { flex: 1; min-width: 0; padding: 0; border: 0; background: none; }
.more { width: 28px; height: 23px; margin-left: 2px; gap: 2px; border: 1px solid #2d2d2d; border-radius: 4px; }
.more i { width: 2px; height: 2px; background: #eee; }
.plot-body { flex: 1; min-height: 0; display: flex; }
.plot-side { flex: none; width: 34px; display: flex; flex-direction: column; align-items: center; gap: 4px; border-top: 1px solid #444; }
.dotrow { width: 26px; height: 2px; margin: 2px 0 3px; background: repeating-linear-gradient(90deg, #ccc 0 2px, transparent 2px 4px); }
.plot-side button { width: 26px; height: 26px; border: 1px solid #383838; border-radius: 4px; background: #2b2b2b; }
.plot-side .on { background: #66c4ff; border-color: #66c4ff; }
.plots { flex: 1; display: flex; flex-direction: column; padding-bottom: 12px; background: #000; }
.plot { flex: 1; width: 100%; min-height: 0; }
.plot text { fill: #969696; text-anchor: middle; font-size: 12px; }
.plot .y-label { text-anchor: end; }
.plot .plot-name { font-size: 14px; }
.axis { fill: none; stroke: #969696; shape-rendering: crispEdges; }
.minor { fill: none; stroke: #454545; shape-rendering: crispEdges; }
.curve { fill: none; stroke: #f00; stroke-width: 2px; }
.plot-status { flex: none; height: 21px; display: flex; align-items: center; justify-content: space-between; padding: 0 2px 0 6px; }
```
FILE: app.js
```js
// Time/value pairs of the signal's turning points after the initial rise.
const turns = [
  [1.11, 2.14], [1.44, 1.84], [1.77, 2.14], [2.08, 1.84], [2.42, 2.14], [2.73, 1.84],
  [3.06, 2.14], [3.39, 1.84], [3.72, 2.13], [3.80, 2.12], [4.10, 2.34], [4.42, 2.13],
  [4.90, 2.43], [5.22, 2.35], [5.60, 2.58], [5.92, 2.39], [6.25, 2.58], [6.57, 2.39],
  [6.91, 2.58], [7.23, 2.39], [7.56, 2.58], [7.88, 2.39], [8.21, 2.58], [8.52, 2.39],
  [8.86, 2.58], [9.18, 2.39], [9.51, 2.58], [9.82, 2.39]
];
const X = t => 42.5 + 61 * t;
const Y = v => 172 - 47 * v;

function curvePath() {
  let d = `M${X(0)} ${Y(0)}C${X(.32)} ${Y(.98)} ${X(.88)} ${Y(2.14)} ${X(1.11)} ${Y(2.14)}`;
  for (let i = 1; i < turns.length; i++) {
    const [t0, v0] = turns[i - 1], [t1, v1] = turns[i], k = (t1 - t0) * .4;
    d += `C${X(t0 + k)} ${Y(v0)} ${X(t1 - k)} ${Y(v1)} ${X(t1)} ${Y(v1)}`;
  }
  return d + `Q${X(9.9)} ${Y(2.39)} ${X(10)} ${Y(2.52)}`;
}

for (const plot of document.querySelectorAll('.plot')) {
  let axis = 'M29.5 39V184.500H667', minor = '', labels = '';
  for (let i = 0; i <= 50; i++) {
    const x = Math.floor(X(i / 5)) + .5;
    if (i % 10 === 0) axis += `M${x} 184V178`; else minor += `M${x} 184V${i % 5 ? 180 : 179}`;
    if (i % 5 === 0) labels += `<text x="${x}" y="198">${i / 5}</text>`;
  }
  for (let i = -2; i <= 28; i++) {
    const y = Math.round(Y(i / 10)) - .5;
    if (i % 10 === 0) axis += `M29 ${y}H36`; else minor += `M30 ${y}H34`;
    if (i >= 0 && i % 5 === 0) labels += `<text class="y-label" x="26" y="${y + 5}">${i / 10}</text>`;
  }
  plot.innerHTML = `<path class="minor" d="${minor}"/><path class="axis" d="${axis}"/>${labels}` +
    `<text class="plot-name" x="348" y="31">${plot.dataset.title}</text><path class="curve" d="${curvePath()}"/>`;
}
```
